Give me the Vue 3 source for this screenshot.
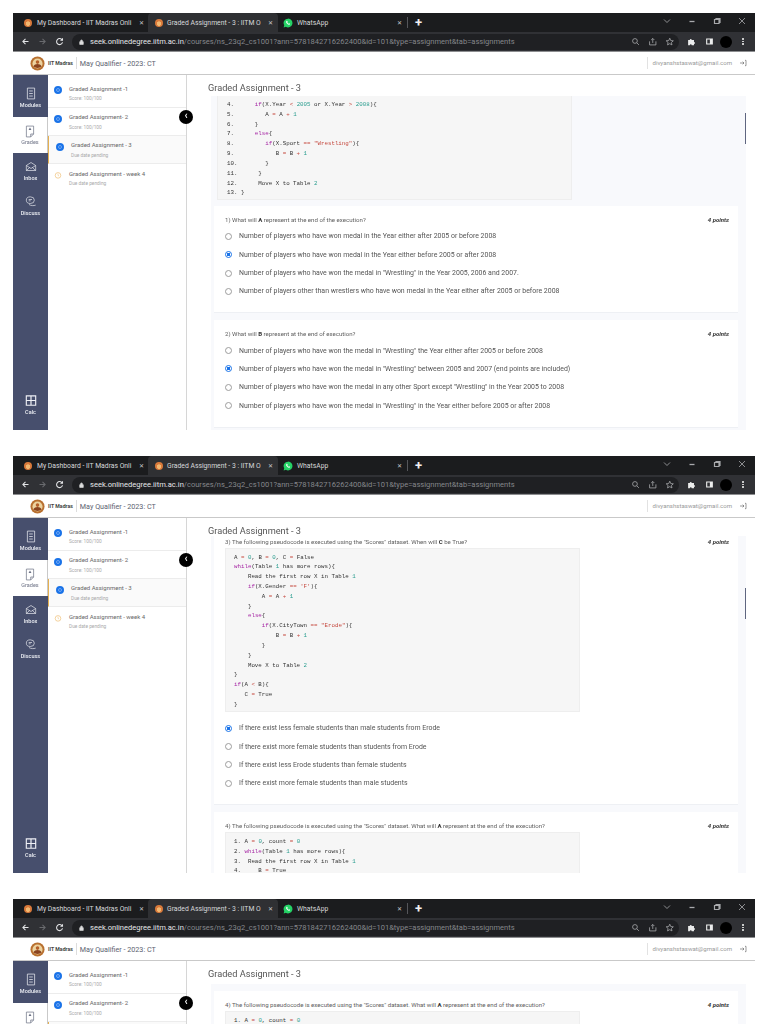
<script setup>
const TOKEN = /("[^"]*"|'[^']*'|\b(?:while|if|else)\b|\b\d+\b(?!\.)|==|[=+<>])/;

function tokens(line) {
  return line.split(TOKEN).filter(Boolean).map((text) => {
    let kind = 'plain';
    if (/^(while|if|else)$/.test(text)) kind = 'kw';
    else if (/^\d+$/.test(text)) kind = 'num';
    else if (/^["']/.test(text)) kind = 'str';
    else if (/^(==|=|\+|<|>)$/.test(text)) kind = 'op';
    return { text, kind };
  });
}

const lessons = [
  { title: 'Graded Assignment -1', sub: 'Score: 100/100', state: 'done' },
  { title: 'Graded Assignment- 2', sub: 'Score: 100/100', state: 'done' },
  { title: 'Graded Assignment - 3', sub: 'Due date pending', state: 'current' },
  { title: 'Graded Assignment - week 4', sub: 'Due date pending', state: 'pending' }
];

const code3 = [
  'A = 0, B = 0, C = False',
  'while(Table 1 has more rows){',
  '    Read the first row X in Table 1',
  '    if(X.Gender == \'F\'){',
  '        A = A + 1',
  '    }',
  '    else{',
  '        if(X.CityTown == "Erode"){',
  '            B = B + 1',
  '        }',
  '    }',
  '    Move X to Table 2',
  '}',
  'if(A < B){',
  '   C = True',
  '}'
];

const code4 = [
  '1. A = 0, count = 0',
  '2. while(Table 1 has more rows){',
  '3.  Read the first row X in Table 1',
  '4.     B = True'
];

const q4 = {
  label: ['4) The following pseudocode is executed using the "Scores" dataset. What will ', 'A', ' represent at the end of the execution?'],
  code: code4,
  options: []
};

const shots = [
  {
    id: 1,
    thumb: 17,
    intro: [
      '4.      if(X.Year < 2005 or X.Year > 2008){',
      '5.         A = A + 1',
      '6.      }',
      '7.      else{',
      '8.         if(X.Sport == "Wrestling"){',
      '9.            B = B + 1',
      '10.        }',
      '11.      }',
      '12.      Move X to Table 2',
      '13. }'
    ],
    questions: [
      {
        label: ['1) What will ', 'A', ' represent at the end of the execution?'],
        selected: 1,
        options: [
          'Number of players who have won medal in the Year either after 2005 or before 2008',
          'Number of players who have won medal in the Year either before 2005 or after 2008',
          'Number of players who have won the medal in "Wrestling" in the Year 2005, 2006 and 2007.',
          'Number of players other than wrestlers who have won medal in the Year either after 2005 or before 2008'
        ]
      },
      {
        label: ['2) What will ', 'B', ' represent at the end of execution?'],
        selected: 1,
        options: [
          'Number of players who have won the medal in "Wrestling" the Year either after 2005 or before 2008',
          'Number of players who have won the medal in "Wrestling" between 2005 and 2007 (end points are included)',
          'Number of players who have won the medal in any other Sport except "Wrestling" in the Year 2005 to 2008',
          'Number of players who have won the medal in "Wrestling" in the Year either before 2005 or after 2008'
        ]
      }
    ]
  },
  {
    id: 2,
    tight: true,
    thumb: 52,
    questions: [
      {
        label: ['3) The following pseudocode is executed using the "Scores" dataset. When will ', 'C', ' be True?'],
        code: code3,
        selected: 0,
        options: [
          'If there exist less female students than male students from Erode',
          'If there exist more female students than students from Erode',
          'If there exist less Erode students than female students',
          'If there exist more female students than male students'
        ]
      },
      q4
    ]
  },
  { id: 3, questions: [q4] }
];
</script>

<template>
  <div class="page">
    <section v-for="shot in shots" :key="shot.id" class="shot">
      <div class="tabbar">
        <div class="tab first-tab">
          <span class="favicon"></span>
          <span class="tab-title">My Dashboard - IIT Madras Onli</span>
          <span class="tab-x">✕</span>
        </div>
        <div class="tab active">
          <span class="favicon"></span>
          <span class="tab-title">Graded Assignment - 3 : IITM O</span>
          <span class="tab-x">✕</span>
        </div>
        <div class="tab wide">
          <svg class="wa" viewBox="0 0 16 16">
            <path d="M8 1a7 7 0 0 0-6 10.600L1 15l3.500-1A7 7 0 1 0 8 1z" fill="#25d366" />
            <path d="M5.600 4.600c-1 1-.7 2.600.7 4.200 1.500 1.700 3.200 2.500 4.400 1.700.7-.5.8-1.200.6-1.400L9.700 8.300l-.8.7c-.8-.3-1.600-1.100-2-2l.7-.8-.8-1.600c-.3-.2-.8-.2-1.200 0z" fill="#fff" />
          </svg>
          <span class="tab-title">WhatsApp</span>
          <span class="tab-x">✕</span>
        </div>
        <span class="tab-sep"></span>
        <span class="plus">+</span>
        <div class="win">
          <svg viewBox="0 0 10 10"><path d="M2 3.500l3 3 3-3" /></svg>
          <svg viewBox="0 0 10 10"><path d="M2.500 5.500h5" stroke-width="1.300" /></svg>
          <svg viewBox="0 0 10 10"><path d="M2.500 3.500h4.500v4h-4.500zM4 3.500v-1h4v4h-1" stroke-width="1.200" /></svg>
          <svg viewBox="0 0 10 10"><path d="M2 2l6 6M8 2l-6 6" /></svg>
        </div>
      </div>

      <div class="toolbar">
        <div class="nav">
          <svg viewBox="0 0 12 12"><path d="M10 6H2.500M6 2.500L2.500 6 6 9.500" /></svg>
          <svg class="off" viewBox="0 0 12 12"><path d="M2 6h7.500M6 2.500L9.500 6 6 9.500" /></svg>
          <svg viewBox="0 0 12 12"><path d="M9.500 4A4 4 0 1 0 10 7M10 1.500V4.300H7.200" /></svg>
        </div>
        <div class="omnibox">
          <svg class="lock" viewBox="0 0 8 10"><path d="M1 4.500h6V9H1zM2.500 4.500V3a1.500 1.500 0 0 1 3 0v1.500" /></svg>
          <span class="url"><b>seek.onlinedegree.iitm.ac.in</b>/courses/ns_23q2_cs1001?ann=5781842716262400&amp;id=101&amp;type=assignment&amp;tab=assignments</span>
          <svg class="omni-icon" viewBox="0 0 12 12"><circle cx="5" cy="5" r="3" /><path d="M7.300 7.300L10 10" /></svg>
          <svg class="omni-icon" viewBox="0 0 12 12"><path d="M2 5.500v4.500h8V5.500M6 7.500V2M4 3.800L6 1.800l2 2" /></svg>
          <svg class="omni-icon" viewBox="0 0 12 12"><path d="M6 1.500l1.300 3 3.200.3-2.400 2.100.7 3.100L6 8.400 3.200 10l.7-3.100L1.500 4.800l3.200-.3z" /></svg>
        </div>
        <div class="ext">
          <svg viewBox="0 0 12 12"><path class="fill" d="M1.500 4h2.200a1.300 1.300 0 0 1 2.600 0h3v2.600a1.300 1.300 0 0 1 0 2.600V11h-3a1.300 1.300 0 0 0-2.600 0H1.500z" /></svg>
          <svg viewBox="0 0 12 12"><path class="fill" fill-rule="evenodd" d="M1.500 2h9v8h-9zM3 3.300v5.400h3.500V3.300z" /></svg>
          <span class="avatar"></span>
          <span class="dots"><i></i><i></i><i></i></span>
        </div>
      </div>

      <header class="site">
        <svg class="logo" viewBox="0 0 16 16">
          <circle cx="8" cy="8" r="7.500" fill="#b8702f" />
          <circle cx="8" cy="8" r="5.400" fill="#ecd3a0" />
          <circle cx="8" cy="6.500" r="1.900" fill="#b5602a" />
          <path d="M3.600 11c1-1.800 2.500-2.600 4.400-2.600s3.400.8 4.400 2.600c-1.200 1.200-2.700 1.700-4.400 1.700S4.800 12.200 3.600 11z" fill="#8a4420" />
        </svg>
        <span class="brand">IIT Madras</span>
        <span class="site-title">May Qualifier - 2023: CT</span>
        <span class="email">divyanshstaswat@gmail.com</span>
        <svg class="logout" viewBox="0 0 12 12"><path d="M1.500 6h6M5.500 4l2 2-2 2M9 2h1.500v8H9" /></svg>
      </header>

      <div class="body">
        <nav class="rail">
          <div class="rail-item first">
            <svg viewBox="0 0 16 18"><path d="M3 1.500h10v15H3zM5.500 5.500h5M5.500 9h5M5.500 12.500h5" /></svg>
            <span>Modules</span>
          </div>
          <div class="rail-item on">
            <svg viewBox="0 0 16 18"><path d="M3 1.500h10v11l-4 4H3zM13 12.500H9v4" /><path class="fill" d="M8 3.500l2 3.500H6z" /></svg>
            <span>Grades</span>
          </div>
          <div class="rail-item">
            <svg viewBox="0 0 18 18"><path d="M2 7.500L9 3l7 4.500V15H2zM2 7.500L9 12l7-4.500M2 15l5-4.500M16 15l-5-4.500" /></svg>
            <span>Inbox</span>
          </div>
          <div class="rail-item">
            <svg viewBox="0 0 18 18"><ellipse cx="8" cy="7" rx="6" ry="5" /><path d="M5.500 6h5M5.500 8h3M6 13.500c3 2 7 2 10 1" /></svg>
            <span>Discuss</span>
          </div>
          <div class="rail-item calc">
            <svg viewBox="0 0 16 16"><path class="fill" fill-rule="evenodd" d="M1 1h14v14H1zM2.500 2.500v4.700h4.700V2.500zM8.800 2.500v4.700h4.700V2.500zM2.500 8.800v4.700h4.700V8.800zM8.800 8.800v4.700h4.700V8.800z" /></svg>
            <span>Calc</span>
          </div>
        </nav>

        <aside class="lessons">
          <div
            v-for="item in lessons"
            :key="item.title"
            class="lesson"
            :class="item.state"
          >
            <svg v-if="item.state === 'pending'" class="mark" viewBox="0 0 10 10">
              <circle cx="5" cy="5.500" r="3.500" fill="none" stroke="#efc27a" stroke-width=".9" />
              <path d="M5 3.500v2l1.300.8" fill="none" stroke="#efc27a" stroke-width=".7" />
            </svg>
            <span v-else class="dot"></span>
            <div>
              <div class="lesson-title">{{ item.title }}</div>
              <div class="lesson-sub">{{ item.sub }}</div>
            </div>
          </div>
          <span class="collapse">‹</span>
        </aside>

        <main class="main" :class="{ tight: shot.tight }">
          <h1 class="heading">Graded Assignment - 3</h1>
          <div class="panel">
            <pre v-if="shot.intro" class="code intro"><span v-for="(line, i) in shot.intro" :key="i" class="line"><span v-for="(t, j) in tokens(line)" :key="j" :class="t.kind">{{ t.text }}</span></span></pre>
            <div v-for="q in shot.questions" :key="q.label[0]" class="card">
              <div class="q-head">
                <span>{{ q.label[0] }}<b>{{ q.label[1] }}</b>{{ q.label[2] }}</span>
                <em>4 points</em>
              </div>
              <pre v-if="q.code" class="code"><span v-for="(line, i) in q.code" :key="i" class="line"><span v-for="(t, j) in tokens(line)" :key="j" :class="t.kind">{{ t.text }}</span></span></pre>
              <div
                v-for="(opt, i) in q.options"
                :key="i"
                class="option"
              >
                <span class="radio" :class="{ picked: i === q.selected }"></span>
                <span>{{ opt }}</span>
              </div>
            </div>
            <span v-if="shot.thumb" class="thumb" :style="{ top: shot.thumb + 'px' }"></span>
          </div>
        </main>
      </div>
    </section>
  </div>
</template>

<style>
html, body {
  margin: 0;
  background: #fff;
  overflow: hidden;
}
</style>

<style scoped>
.page {
  height: 1024px;
  overflow: hidden;
  padding: 13px 13px 0;
  box-sizing: border-box;
  font-family: Roboto, "Liberation Sans", sans-serif;
}

.shot {
  width: 742px;
  height: 417px;
  margin-bottom: 26px;
  display: flex;
  flex-direction: column;
  overflow: hidden;
  filter: blur(0.4px);
}

.tabbar {
  height: 19px;
  flex: none;
  display: flex;
  align-items: center;
  background: #1b1c1e;
  color: #d8d9db;
  font-size: 6.800px;
}

.tab {
  width: 130px;
  height: 19px;
  padding-left: 7px;
  box-sizing: border-box;
  display: flex;
  align-items: center;
  gap: 4px;
}

.tab.first-tab {
  width: 135px;
  padding-left: 11px;
  gap: 5px;
}

.tab.active {
  background: #2f3033;
  border-radius: 4px 4px 0 0;
}

.tab.wide {
  padding-left: 5px;
}

.favicon {
  flex: none;
  width: 8px;
  height: 8px;
  border-radius: 50%;
  background: radial-gradient(circle at 50% 58%, #f2b871 0 2px, #d9793a 2.500px);
}

.wa {
  width: 10px;
  height: 10px;
  flex: none;
}

.tab-title {
  flex: 1;
  white-space: nowrap;
}

.tab-x {
  flex: none;
  width: 14px;
  padding-left: 3px;
  box-sizing: border-box;
  font-size: 6px;
  color: #c8c9cb;
}

.tab-sep {
  width: 1px;
  height: 11px;
  background: #55565a;
  margin-left: -1px;
}

.plus {
  margin-left: 7px;
  font-size: 13px;
  font-weight: 700;
  color: #f1f1f1;
  line-height: 1;
}

.win {
  margin-left: auto;
  margin-top: -4px;
  display: flex;
  gap: 15px;
  padding-right: 8px;
}

.win svg {
  width: 10px;
  height: 10px;
  fill: none;
  stroke: #a8a9ac;
  stroke-width: 0.8;
}

.toolbar {
  height: 20px;
  flex: none;
  display: flex;
  align-items: center;
  background: #303135;
  border-bottom: 1px solid #8d8e90;
  box-sizing: border-box;
}

.nav {
  width: 59px;
  flex: none;
  padding-left: 8px;
  box-sizing: border-box;
  display: flex;
  gap: 8px;
}

.nav svg {
  width: 9px;
  height: 9px;
  fill: none;
  stroke: #e4e5e7;
  stroke-width: 1.400;
}

.nav svg.off {
  stroke: #696a6e;
}

.omnibox {
  width: 607px;
  height: 16px;
  flex: none;
  padding: 0 5px 0 7px;
  box-sizing: border-box;
  display: flex;
  align-items: center;
  background: #1f2023;
  border-radius: 8px;
}

.lock {
  width: 5px;
  height: 6px;
  fill: #ddd;
  stroke: #ddd;
}

.url {
  margin-left: 6px;
  flex: 1;
  font-size: 7.550px;
  color: #85878b;
  white-space: nowrap;
}

.url b {
  font-weight: 400;
  color: #e6e7e9;
}

.omni-icon {
  width: 9.500px;
  height: 9.500px;
  margin-left: 7.500px;
  fill: none;
  stroke: #a9aaad;
  stroke-width: 1;
}

.ext {
  flex: 1;
  display: flex;
  align-items: center;
  gap: 9px;
  padding-left: 8px;
}

.ext svg {
  width: 9px;
  height: 9px;
  color: #eceded;
}

.fill {
  fill: currentColor;
  stroke: none;
}

.avatar {
  width: 12px;
  height: 12px;
  border-radius: 50%;
  background: #000;
  margin-left: -3px;
}

.dots {
  display: flex;
  flex-direction: column;
  gap: 1px;
  margin-left: 1px;
}

.dots i {
  width: 1.500px;
  height: 1.500px;
  background: #e6e6e6;
  border-radius: 50%;
}

.site {
  height: 23px;
  flex: none;
  display: flex;
  align-items: center;
  border-bottom: 1px solid #c9c9c9;
  box-sizing: border-box;
  padding: 0 8px 0 17px;
  background: #fff;
}

.logo {
  width: 15px;
  height: 15px;
  flex: none;
}

.brand {
  margin-left: 3px;
  padding-right: 3px;
  border-right: 1px solid #ddd;
  font-size: 5.200px;
  font-weight: 700;
  line-height: 12px;
  color: #444;
  white-space: nowrap;
}

.site-title {
  margin-left: 3px;
  font-size: 7.200px;
  color: #5c6270;
}

.email {
  margin-left: auto;
  padding-left: 4px;
  border-left: 1px solid #e2e2e2;
  font-size: 6.100px;
  line-height: 12px;
  color: #9a9a9a;
}

.logout {
  width: 8px;
  height: 8px;
  margin-left: 7px;
  fill: none;
  stroke: #666;
  stroke-width: 1;
}

.body {
  flex: 1;
  min-height: 0;
  display: flex;
}

.rail {
  flex: none;
  width: 35px;
  display: flex;
  flex-direction: column;
  background: #474f6d;
  color: #eef0f5;
}

.rail-item {
  height: 35px;
  flex: none;
  display: flex;
  flex-direction: column;
  align-items: center;
  justify-content: center;
  gap: 1.500px;
  font-size: 5.500px;
  font-weight: 500;
}

.rail-item svg {
  width: 12px;
  height: 13px;
  fill: none;
  stroke: currentColor;
  stroke-width: 1;
}

.rail-item.first {
  height: 42px;
  padding-top: 3px;
  box-sizing: border-box;
}

.rail-item.on {
  height: 36px;
  background: #fff;
  color: #6d7285;
  border-right: 1px solid #c9c9c9;
  box-sizing: border-box;
  font-weight: 400;
}

.rail-item.calc {
  margin-top: auto;
  margin-bottom: 8px;
}

.lessons {
  position: relative;
  flex: none;
  width: 139px;
  box-sizing: border-box;
  border-right: 1px solid #d6d6d6;
  background: #fff;
}

.lesson {
  height: 28px;
  box-sizing: border-box;
  padding-left: 6px;
  display: flex;
  align-items: center;
  gap: 7px;
  border-bottom: 1px solid #ececec;
}

.lesson:first-child {
  height: 33px;
  padding-top: 4px;
}

.lesson.current {
  background: #fafafa;
  border-left: 1px solid #e5b050;
  padding-left: 7px;
}

.lesson.pending {
  border-bottom: 0;
}

.dot {
  flex: none;
  width: 8px;
  height: 8px;
  box-sizing: border-box;
  border-radius: 50%;
  background: #1a73e8;
  border: 2px solid #1a73e8;
  box-shadow: inset 0 0 0 1px #7fb0f5;
  margin-top: -6px;
}

.mark {
  flex: none;
  width: 8px;
  height: 8px;
  margin-top: -6px;
}

.lesson-title {
  font-size: 6px;
  color: #686868;
  white-space: nowrap;
}

.lesson-sub {
  margin-top: 4.500px;
  font-size: 4.800px;
  color: #a9a9a9;
}

.collapse {
  position: absolute;
  top: 35px;
  right: -7px;
  width: 14px;
  height: 14px;
  border-radius: 50%;
  background: #000;
  color: #fff;
  font-size: 10px;
  font-weight: 700;
  line-height: 12px;
  text-align: center;
}

.main {
  flex: 1;
  min-width: 0;
  padding: 0 9px 0 21px;
  display: flex;
  flex-direction: column;
}

.heading {
  height: 21px;
  margin: 0;
  flex: none;
  font-size: 9.200px;
  font-weight: 400;
  line-height: 26px;
  color: #555;
}

.main.tight .heading {
  height: 18px;
}

.shot:last-child .panel {
  padding-top: 7px;
}

.shot:last-child .heading {
  height: 23px;
}

.panel {
  position: relative;
  flex: 1;
  min-height: 0;
  margin-left: 3px;
  padding: 0 8px 0 3px;
  overflow: hidden;
  background: #f8f9fc;
}

.thumb {
  position: absolute;
  right: 0;
  width: 1.500px;
  height: 31px;
  background: #5f6680;
}

.code {
  width: 355px;
  margin: 0;
  padding: 3.500px 0 1.500px 8px;
  box-sizing: border-box;
  background: #f6f6f6;
  border: 1px solid #eeeeee;
  font-family: "Liberation Mono", "DejaVu Sans Mono", monospace;
  font-size: 5.800px;
  line-height: 9.830px;
  color: #333;
}

.code.intro {
  margin: 0 0 6px 3px;
  padding: 4px 0 1px 9px;
  border-top: 0;
}

.line {
  display: block;
  height: 9.830px;
  white-space: pre;
}

.kw { color: #a626a4; }
.num { color: #2a9d8f; }
.str { color: #c5493f; }
.op { color: #c5493f; }

.card {
  margin-bottom: 7px;
  padding: 10px 9px 12px 11px;
  background: #fff;
  border-bottom: 1px solid #eef0f4;
}

.main.tight .card:first-of-type {
  padding-top: 2px;
}

.q-head {
  display: flex;
  justify-content: space-between;
  align-items: center;
  height: 6px;
  font-size: 6.100px;
  color: #606060;
}

.q-head b {
  font-weight: 700;
  color: #333;
}

.q-head em {
  font-weight: 700;
  font-style: italic;
  font-size: 6px;
  color: #333;
}

.q-head + .code {
  margin: 4px 0 7px;
}

.q-head + .option {
  margin-top: 5px;
}

.option {
  height: 18.300px;
  display: flex;
  align-items: center;
  gap: 7px;
  font-size: 6.950px;
  color: #555;
  white-space: nowrap;
}

.radio {
  flex: none;
  width: 7px;
  height: 7px;
  box-sizing: border-box;
  border: 0.800px solid #9d9d9d;
  border-radius: 50%;
}

.radio.picked {
  border-color: #1a73e8;
  background: radial-gradient(circle, #1a73e8 0 1.700px, #fff 2px);
}
</style>
